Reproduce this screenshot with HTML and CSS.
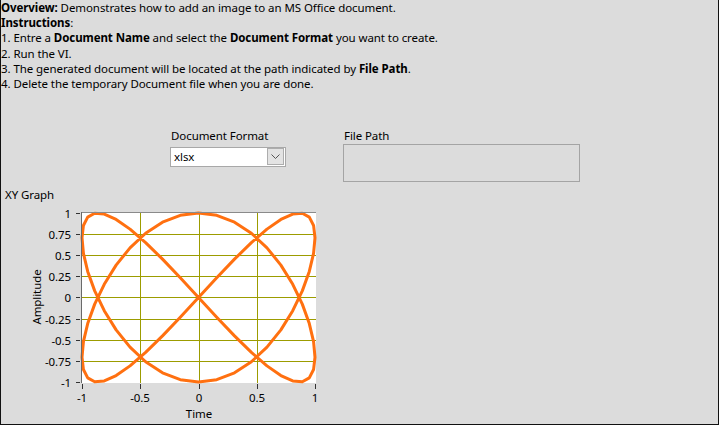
FILE: index.html
```html
<!DOCTYPE html>
<html>
<head>
<meta charset="utf-8">
<link rel="stylesheet" href="styles.css">
</head>
<body>
<div class="panel">
  <div class="intro">
    <p><b>Overview:</b> Demonstrates how to add an image to an MS Office document.</p>
    <p><b>Instructions</b>:</p>
    <p>1. Entre a <b>Document Name</b> and select the <b>Document Format</b> you want to create.</p>
    <p>2. Run the VI.</p>
    <p>3. The generated document will be located at the path indicated by <b>File Path</b>.</p>
    <p>4. Delete the temporary Document file when you are done.</p>
  </div>
  <div class="controls">
    <div class="field field-format">
      <div class="label">Document Format</div>
      <div class="select">
        <span class="value">xlsx</span>
        <span class="arrow"><svg width="15" height="15" viewBox="0 0 15 15"><polyline points="3.5,5.5 7.5,9.5 11.5,5.5" fill="none" stroke="#555" stroke-width="1"/></svg></span>
      </div>
    </div>
    <div class="field field-path">
      <div class="label">File Path</div>
      <div class="pathbox"></div>
    </div>
  </div>
  <div class="graph">
    <div class="label graph-label">XY Graph</div>
    <svg class="plot" width="330" height="222" viewBox="1 202 330 222">
      <rect x="81" y="212" width="235" height="171" fill="#fff"/>
      <g class="grid" stroke="#9c9c00" stroke-width="1">
        <line x1="140.5" y1="213" x2="140.5" y2="383"/>
        <line x1="199.5" y1="213" x2="199.5" y2="383"/>
        <line x1="257.5" y1="213" x2="257.5" y2="383"/>
        <line x1="82" y1="234.5" x2="316" y2="234.5"/>
        <line x1="82" y1="255.5" x2="316" y2="255.5"/>
        <line x1="82" y1="276.5" x2="316" y2="276.5"/>
        <line x1="82" y1="297.5" x2="316" y2="297.5"/>
        <line x1="82" y1="319.5" x2="316" y2="319.5"/>
        <line x1="82" y1="340.5" x2="316" y2="340.5"/>
        <line x1="82" y1="361.5" x2="316" y2="361.5"/>
      </g>
      <polyline id="curve" fill="none" stroke="#ff7010" stroke-width="3" stroke-linejoin="round" points=""/>
      <line x1="81" y1="212.5" x2="316" y2="212.5" stroke="#8a8a8a"/>
      <line x1="81.5" y1="212" x2="81.5" y2="383" stroke="#6a6a6a"/>
      <g class="ticks" stroke="#333" stroke-width="1">
        <line x1="76" y1="213.5" x2="80" y2="213.5"/>
        <line x1="76" y1="234.5" x2="80" y2="234.5"/>
        <line x1="76" y1="255.5" x2="80" y2="255.5"/>
        <line x1="76" y1="276.5" x2="80" y2="276.5"/>
        <line x1="76" y1="297.5" x2="80" y2="297.5"/>
        <line x1="76" y1="319.5" x2="80" y2="319.5"/>
        <line x1="76" y1="340.5" x2="80" y2="340.5"/>
        <line x1="76" y1="361.5" x2="80" y2="361.5"/>
        <line x1="76" y1="382.5" x2="80" y2="382.5"/>
        <line x1="82.5" y1="384" x2="82.5" y2="389"/>
        <line x1="140.5" y1="384" x2="140.5" y2="389"/>
        <line x1="199.5" y1="384" x2="199.5" y2="389"/>
        <line x1="257.5" y1="384" x2="257.5" y2="389"/>
        <line x1="315.5" y1="384" x2="315.5" y2="389"/>
      </g>
      <g class="ylabels" text-anchor="end">
        <text x="71" y="218">1</text>
        <text x="71" y="239">0.75</text>
        <text x="71" y="260">0.5</text>
        <text x="71" y="281">0.25</text>
        <text x="71" y="302">0</text>
        <text x="71" y="324">-0.25</text>
        <text x="71" y="345">-0.5</text>
        <text x="71" y="366">-0.75</text>
        <text x="71" y="387">-1</text>
      </g>
      <g class="xlabels" text-anchor="middle">
        <text x="82" y="402">-1</text>
        <text x="140" y="402">-0.5</text>
        <text x="199" y="402">0</text>
        <text x="257" y="402">0.5</text>
        <text x="315" y="402">1</text>
      </g>
      <text class="axis-title" x="199" y="418" text-anchor="middle">Time</text>
      <text class="axis-title" x="0" y="0" text-anchor="middle" transform="translate(41 297) rotate(-90)">Amplitude</text>
    </svg>
  </div>
</div>
<script src="script.js"></script>
</body>
</html>
```
FILE: styles.css
```css
html, body {
  margin: 0;
  padding: 0;
}
body {
  font-family: "Noto Sans", "Open Sans", sans-serif;
  font-size: 11.5px;
  letter-spacing: -0.08px;
  color: #000;
  background: #dcdcdc;
}
.panel {
  width: 719px;
  height: 425px;
  box-sizing: border-box;
  background: #dcdcdc;
  border-left: 1px solid #111;
  border-right: 1px solid #111;
  border-bottom: 1px solid #111;
  overflow: hidden;
}
.intro p {
  margin: 0;
  line-height: 15.2px;
}
.intro b {
  font-weight: 700;
}
.controls {
  display: flex;
  align-items: flex-start;
  margin-top: 37px;
  padding-left: 169px;
}
.label {
  line-height: 15px;
  white-space: nowrap;
}
.field-format {
  width: 173px;
}
.field-format .label,
.field-path .label {
  padding-left: 1px;
}
.select {
  margin-top: 4px;
  width: 116px;
  height: 20px;
  box-sizing: border-box;
  border: 1px solid #a8a8a8;
  background: #fff;
  display: flex;
  align-items: flex-start;
  justify-content: space-between;
  padding: 0 1px 0 3px;
}
.select .value {
  line-height: 18px;
}
.select .arrow {
  width: 17px;
  height: 17px;
  box-sizing: border-box;
  border: 1px solid #adadad;
  background: #e3e3e3;
  display: flex;
  align-items: center;
  justify-content: center;
}
.select .arrow svg {
  display: block;
}
.pathbox {
  margin-top: 1px;
  width: 237px;
  height: 38px;
  box-sizing: border-box;
  border: 1px solid #a4a4a4;
}
.graph {
  margin-top: 5px;
}
.graph-label {
  padding-left: 4px;
}
.plot {
  display: block;
}
.plot text {
  font-family: "Noto Sans", "Open Sans", sans-serif;
  font-size: 11.5px;
  letter-spacing: -0.08px;
  fill: #000;
}
```
FILE: script.js
```js
(function () {
  var N = 80, pts = [];
  for (var i = 0; i <= N; i++) {
    var t = 2 * Math.PI * i / N;
    var x = Math.sin(2 * t), y = Math.sin(3 * t);
    var px = 82 + (x + 1) * 116.5;
    var py = 213 + (1 - y) * 84.5;
    pts.push(px.toFixed(2) + "," + py.toFixed(2));
  }
  document.getElementById("curve").setAttribute("points", pts.join(" "));
})();
```
